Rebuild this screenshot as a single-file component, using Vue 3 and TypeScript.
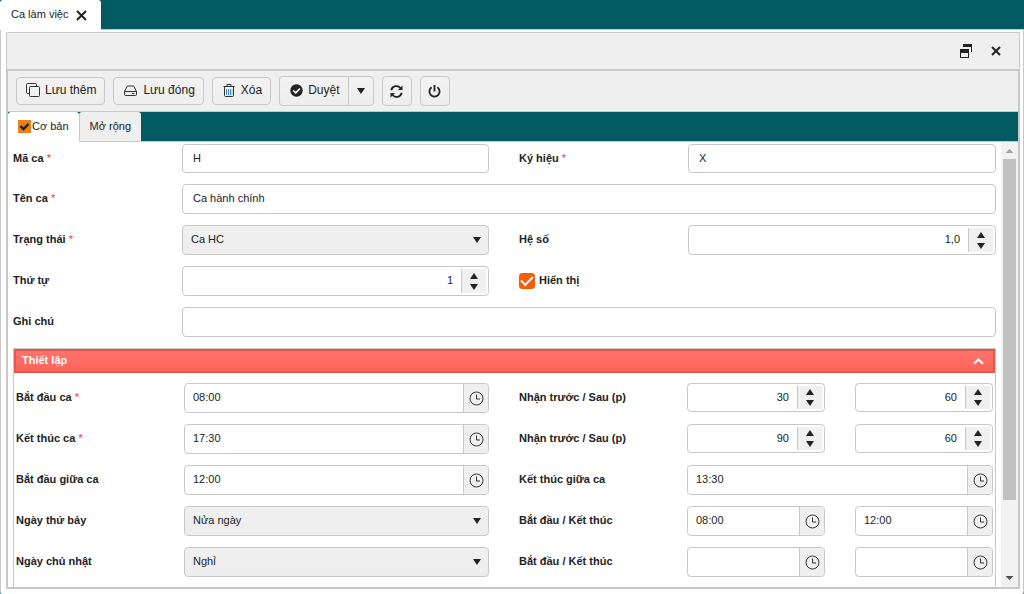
<script setup lang="ts">
import { reactive, ref } from 'vue'

type Kind = 'text' | 'select' | 'number' | 'time' | 'check'

interface Control {
  id: string
  kind: Kind
  value: string
  name?: string
}

interface Field {
  label: string
  required?: boolean
  controls: Control[]
}

const general = reactive<Field[][]>([
  [
    { label: 'Mã ca', required: true, controls: [{ id: 'code', kind: 'text', value: 'H' }] },
    { label: 'Ký hiệu', required: true, controls: [{ id: 'symbol', kind: 'text', value: 'X' }] },
  ],
  [{ label: 'Tên ca', required: true, controls: [{ id: 'name', kind: 'text', value: 'Ca hành chính' }] }],
  [
    { label: 'Trạng thái', required: true, controls: [{ id: 'state', kind: 'select', value: 'Ca HC' }] },
    { label: 'Hệ số', controls: [{ id: 'factor', kind: 'number', value: '1,0' }] },
  ],
  [
    { label: 'Thứ tự', controls: [{ id: 'order', kind: 'number', value: '1' }] },
    { label: 'Hiển thị', controls: [{ id: 'visible', kind: 'check', value: '' }] },
  ],
  [{ label: 'Ghi chú', controls: [{ id: 'note', kind: 'text', value: '' }] }],
])

const setup = reactive<Field[][]>([
  [
    { label: 'Bắt đầu ca', required: true, controls: [{ id: 'start', kind: 'time', value: '08:00' }] },
    {
      label: 'Nhận trước / Sau (p)',
      controls: [
        { id: 'inBefore', kind: 'number', value: '30' },
        { id: 'inAfter', kind: 'number', value: '60', name: 'Sau (p)' },
      ],
    },
  ],
  [
    { label: 'Kết thúc ca', required: true, controls: [{ id: 'end', kind: 'time', value: '17:30' }] },
    {
      label: 'Nhận trước / Sau (p)',
      controls: [
        { id: 'outBefore', kind: 'number', value: '90' },
        { id: 'outAfter', kind: 'number', value: '60', name: 'Sau (p)' },
      ],
    },
  ],
  [
    { label: 'Bắt đầu giữa ca', controls: [{ id: 'midStart', kind: 'time', value: '12:00' }] },
    { label: 'Kết thúc giữa ca', controls: [{ id: 'midEnd', kind: 'time', value: '13:30' }] },
  ],
  [
    { label: 'Ngày thứ bảy', controls: [{ id: 'saturday', kind: 'select', value: 'Nửa ngày' }] },
    {
      label: 'Bắt đầu / Kết thúc',
      controls: [
        { id: 'satStart', kind: 'time', value: '08:00' },
        { id: 'satEnd', kind: 'time', value: '12:00', name: 'Kết thúc' },
      ],
    },
  ],
  [
    { label: 'Ngày chủ nhật', controls: [{ id: 'sunday', kind: 'select', value: 'Nghỉ' }] },
    {
      label: 'Bắt đầu / Kết thúc',
      controls: [
        { id: 'sunStart', kind: 'time', value: '' },
        { id: 'sunEnd', kind: 'time', value: '', name: 'Kết thúc' },
      ],
    },
  ],
])

const blocks = [
  { key: 'general', rows: general },
  { key: 'setup', rows: setup },
]

const visible = ref(true)
const open = ref(true)

function step(control: Control, delta: number) {
  const decimals = control.value.includes(',') ? 1 : 0
  const next = parseFloat(control.value.replace(',', '.')) + delta
  control.value = next.toFixed(decimals).replace('.', ',')
}
</script>

<template>
  <div class="app">
    <nav class="page-tabs">
      <div class="page-tab">
        <span>Ca làm việc</span>
        <button type="button" class="plain" aria-label="Đóng thẻ">
          <svg width="11" height="11" viewBox="0 0 11 11"><path d="M1 1 10 10M10 1 1 10" stroke="#222" stroke-width="2" fill="none" /></svg>
        </button>
      </div>
    </nav>

    <main class="page">
      <section class="window">
        <header class="titlebar">
          <button type="button" class="plain" aria-label="Thu nhỏ">
            <svg width="13" height="14" viewBox="0 0 13 14">
              <path d="M3 0h9v8h-1V3H3z" fill="#222" />
              <path d="M0 5h9v9H0zM1 9v4h7V9z" fill="#222" fill-rule="evenodd" />
            </svg>
          </button>
          <button type="button" class="plain" aria-label="Đóng">
            <svg width="10" height="10" viewBox="0 0 10 10"><path d="M1 1 9 9M9 1 1 9" stroke="#222" stroke-width="2" fill="none" /></svg>
          </button>
        </header>

        <div class="body">
          <div class="toolbar">
            <button type="button" class="tool">
              <svg width="15" height="15" viewBox="0 0 15 15" fill="none" stroke="#333">
                <path d="M3.5 10.5h-2a1 1 0 0 1-1-1v-8a1 1 0 0 1 1-1h8a1 1 0 0 1 1 1v2" />
                <rect x="3.5" y="3.5" width="10" height="10" rx="1" />
              </svg>
              Lưu thêm
            </button>
            <button type="button" class="tool wide">
              <svg width="13" height="15" viewBox="0 0 13 15" fill="none" stroke="#333">
                <path d="M.5 8.500 3 3.500q.2-.5.8-.5h5.400q.6 0 .8.5l2.500 5v3a1 1 0 0 1-1 1h-10a1 1 0 0 1-1-1zM.5 8.500h12M8 10.500h2.500" />
              </svg>
              Lưu đóng
            </button>
            <button type="button" class="tool wide">
              <svg width="12" height="15" viewBox="0 0 12 15" fill="none" stroke="#333">
                <path d="M.5 3.500h11M4 3.500v-2h4v2M1.500 4v8.500a1 1 0 0 0 1 1h7a1 1 0 0 0 1-1V4" />
                <path d="M3.500 6v6M5.500 6v6M7.500 6v6" stroke="#3a8ed0" /><path d="M9 6v6" stroke="#8fc3ec" />
              </svg>
              Xóa
            </button>
            <div class="split">
              <button type="button" class="tool main">
                <svg width="13" height="13" viewBox="0 0 13 13">
                  <circle cx="6.500" cy="6.500" r="6.200" fill="#222" />
                  <path d="m3.300 6.500 2.400 2.300 4.200-4.200" fill="none" stroke="#fff" stroke-width="1.700" />
                </svg>
                Duyệt
              </button>
              <button type="button" class="tool more" aria-label="Tùy chọn duyệt">
                <svg width="8" height="6" viewBox="0 0 8 6"><path d="M0 0h8L4 6z" fill="#222" /></svg>
              </button>
            </div>
            <button type="button" class="tool square" aria-label="Làm mới">
              <svg width="13" height="13" viewBox="0 0 13 13" fill="none" stroke="#222" stroke-width="1.800">
                <path d="M1.300 5.200A5.200 5.200 0 0 1 10.400 3M11.700 7.800A5.200 5.200 0 0 1 2.600 10" />
                <path d="M12.500.6v4.500H8zM.5 12.400V7.900H5z" fill="#222" stroke="none" />
              </svg>
            </button>
            <button type="button" class="tool square" aria-label="Thoát">
              <svg width="13" height="13" viewBox="0 0 13 13" fill="none" stroke="#222" stroke-width="1.800">
                <path d="M3.700 2.300a5.100 5.100 0 1 0 5.600 0M6.500 0v6.500" />
              </svg>
            </button>
          </div>

          <div class="tabs" role="tablist">
            <button type="button" role="tab" aria-selected="true" class="tab active">
              <svg width="13" height="13" viewBox="0 0 13 13">
                <path d="M0 0h13v13H0z" fill="#e8811c" />
                <path d="m2.500 6.200 3 2.800 5-5" fill="none" stroke="#222" stroke-width="2.400" />
              </svg>
              Cơ bản
            </button>
            <button type="button" role="tab" aria-selected="false" class="tab">Mở rộng</button>
          </div>

          <div class="view">
            <form class="form" @submit.prevent>
              <div v-for="block in blocks" :key="block.key" :class="block.key">
                <button v-if="block.key === 'setup'" type="button" class="section-head" :aria-expanded="open" @click="open = !open">
                  <span>Thiết lập</span>
                  <svg width="11" height="7" viewBox="0 0 11 7"><path d="m1 5.800 4.500-4.300L10 5.800" fill="none" stroke="#fff" stroke-width="2" /></svg>
                </button>
                <div v-show="block.key === 'general' || open" class="rows">
                  <div v-for="(row, r) in block.rows" :key="r" class="row" :class="{ full: row.length === 1 }">
                    <template v-for="field in row" :key="field.label">
                      <div v-if="field.controls[0].kind === 'check'" class="check">
                        <input :id="field.controls[0].id" v-model="visible" type="checkbox" />
                        <label :for="field.controls[0].id">{{ field.label }}</label>
                      </div>
                      <div v-else class="field">
                        <label :for="field.controls[0].id">{{ field.label }} <span v-if="field.required" class="star">*</span></label>
                        <div class="controls">
                          <div v-for="c in field.controls" :key="c.id" class="box" :class="c.kind">
                            <template v-if="c.kind === 'select'">
                              <select :id="c.id" v-model="c.value">
                                <option>{{ c.value }}</option>
                              </select>
                              <svg class="caret" width="8" height="6" viewBox="0 0 8 6"><path d="M0 0h8L4 6z" fill="#222" /></svg>
                            </template>
                            <template v-else>
                              <input :id="c.id" v-model="c.value" type="text" :aria-label="c.name" />
                              <div v-if="c.kind === 'number'" class="spin">
                                <button type="button" class="plain" aria-label="Tăng" @click="step(c, 1)">
                                  <svg width="8" height="6" viewBox="0 0 8 6"><path d="M0 6h8L4 0z" fill="#222" /></svg>
                                </button>
                                <button type="button" class="plain" aria-label="Giảm" @click="step(c, -1)">
                                  <svg width="8" height="6" viewBox="0 0 8 6"><path d="M0 0h8L4 6z" fill="#222" /></svg>
                                </button>
                              </div>
                              <button v-if="c.kind === 'time'" type="button" class="clock" aria-label="Chọn giờ">
                                <svg width="15" height="15" viewBox="0 0 15 15" fill="none" stroke="#333">
                                  <circle cx="7.500" cy="7.500" r="6.500" /><path d="M7.500 3.500v4.500H11" />
                                </svg>
                              </button>
                            </template>
                          </div>
                        </div>
                      </div>
                    </template>
                  </div>
                </div>
              </div>
            </form>
            <div class="scroll" aria-hidden="true">
              <svg width="17" height="17" viewBox="0 0 17 17"><path d="M4.500 11h8l-4-4z" fill="#a3a3a3" /></svg>
              <div class="rail"><div class="thumb"></div></div>
              <svg width="17" height="17" viewBox="0 0 17 17"><path d="M4.500 6h8l-4 4z" fill="#505050" /></svg>
            </div>
          </div>
        </div>
      </section>
    </main>
  </div>
</template>

<style>
body {
  margin: 0;
}
</style>

<style scoped>
.app,
.app * {
  box-sizing: border-box;
}
.app {
  display: flex;
  flex-direction: column;
  height: 100vh;
  overflow: hidden;
  background: #005a61;
  color: #222;
  font: 11px/14px "Liberation Sans", Arial, sans-serif;
}
button,
input,
select {
  margin: 0;
  padding: 0;
  border: 0;
  outline: 0;
  background: none;
  color: inherit;
  font: inherit;
}
svg {
  display: block;
  flex: none;
}
.plain {
  display: flex;
  align-items: center;
  justify-content: center;
}
.page-tabs {
  display: flex;
  flex: none;
  height: 29px;
}
.page-tab {
  display: flex;
  align-items: center;
  gap: 8px;
  height: 30px;
  padding: 0 14px 0 11px;
  border-radius: 3px 3px 0 0;
  background: #fff;
  z-index: 1;
}
.page-tab span,
.section-head span {
  padding-bottom: 2px;
}
.page {
  display: flex;
  flex: 1;
  min-height: 0;
  padding: 2px 3px 5px 5px;
  border: 1px solid #c8c8c8;
  border-bottom: 0;
  border-radius: 0 0 2px 2px;
  background: #fff;
}
.window {
  display: flex;
  flex: 1;
  flex-direction: column;
  min-width: 0;
  background: #efefef;
}
.titlebar {
  display: flex;
  flex: none;
  align-items: center;
  justify-content: flex-end;
  gap: 18px;
  height: 37px;
  padding-right: 18px;
  border: 1px solid #c8c8c8;
  border-bottom: 0;
  border-radius: 2px 2px 0 0;
}
.body {
  display: flex;
  flex: 1;
  flex-direction: column;
  min-height: 0;
  border: 2px solid #c8c8c8;
}
.toolbar {
  display: flex;
  flex: none;
  align-items: center;
  gap: 8px;
  height: 41px;
  padding: 0 8px;
  border-bottom: 1px solid #c8c8c8;
}
.tool {
  display: flex;
  align-items: center;
  gap: 4px;
  height: 28px;
  padding: 0 8px 2px 9px;
  border: 1px solid #c8c8c8;
  border-radius: 4px;
  background: linear-gradient(#f2f2f2, #eee);
  font-size: 12px;
  white-space: nowrap;
}
.tool.wide {
  gap: 6px;
  padding-left: 10px;
}
.split {
  display: flex;
}
.split .tool,
.square {
  height: 30px;
}
.tool.main {
  gap: 5px;
  padding: 0 8px 2px 10px;
  border-right: 0;
  border-radius: 4px 0 0 4px;
}
.tool.more {
  padding: 0 8px;
  border-radius: 0 4px 4px 0;
}
.tool.square {
  justify-content: center;
  width: 30px;
  padding: 0;
}
.tabs {
  display: flex;
  flex: none;
  height: 30px;
  border-bottom: 1px solid #c8c8c8;
  background: #005a61;
}
.tab {
  display: flex;
  align-items: center;
  gap: 1px;
  height: 29px;
  padding: 0 10px 2px;
  border-left: 1px solid #c8c8c8;
  border-radius: 3px 3px 0 0;
  background: #efefef;
}
.tab.active {
  height: 30px;
  border-left: 0;
  background: #fff;
}
.view {
  display: flex;
  flex: 1;
  min-height: 0;
  background: #fff;
}
.form {
  flex: 1;
  min-width: 0;
  padding: 2px 5px 0;
  overflow: hidden;
}
.rows {
  display: flex;
  flex-direction: column;
  gap: 11px;
}
.general {
  margin-bottom: 11px;
}
.row {
  display: grid;
  grid-template-columns: minmax(0, 476fr) minmax(0, 477fr);
  gap: 30px;
  height: 30px;
}
.general .row:first-child {
  height: 29px;
}
.row.full {
  grid-template-columns: minmax(0, 1fr);
}
.field {
  display: grid;
  grid-template-columns: 169px minmax(0, 1fr);
  min-width: 0;
}
.setup .field {
  grid-template-columns: 168px minmax(0, 1fr);
}
label {
  font-weight: bold;
  line-height: 28px;
}
.star {
  color: #ff2b45;
  font-weight: normal;
}
.controls {
  display: flex;
  gap: 30px;
  min-width: 0;
}
.box {
  position: relative;
  display: flex;
  flex: 1;
  min-width: 0;
  border: 1px solid #c8c8c8;
  border-radius: 4px;
  background: #fff;
  overflow: hidden;
}
.box input,
.box select {
  flex: 1;
  width: 0;
  min-width: 0;
  padding: 0 8px 2px;
}
.box.text input {
  padding-left: 10px;
}
.box.select {
  background: linear-gradient(#f0f0f0, #ededed);
}
.box select {
  appearance: none;
}
.caret {
  position: absolute;
  top: 11px;
  right: 7px;
  pointer-events: none;
}
.box.number input {
  text-align: right;
}
.setup .box.number {
  height: 29px;
}
.spin {
  display: flex;
  flex-direction: column;
  justify-content: center;
  gap: 5px;
  width: 25px;
  margin: 2px 2px 2px 0;
  border-left: 1px solid #c8c8c8;
  background: #f0f0f0;
}
.clock {
  display: flex;
  align-items: center;
  justify-content: center;
  width: 25px;
  border-left: 1px solid #c8c8c8;
  background: #efefef;
}
.check {
  display: flex;
  align-items: center;
  gap: 4px;
}
.check input {
  display: grid;
  place-items: center;
  width: 16px;
  height: 16px;
  border: 1px solid #f95b00;
  border-radius: 3px;
  appearance: none;
}
.check input:checked {
  background: #f95b00;
}
.check input:checked::before {
  content: "";
  width: 10px;
  height: 5px;
  margin-bottom: 3px;
  border: solid #fff;
  border-width: 0 0 2px 2px;
  transform: rotate(-45deg);
}
.check label {
  height: 30px;
}
.setup {
  border: 1px solid #c8c8c8;
}
.section-head {
  display: flex;
  align-items: center;
  justify-content: space-between;
  width: 100%;
  height: 24px;
  padding: 0 9px 0 6px;
  border: 2px solid #e0594f;
  background: linear-gradient(#ff746c, #ff6359);
  color: #fff;
  font-weight: bold;
}
.setup .rows {
  padding: 10px 2px;
}
.scroll {
  display: flex;
  flex: none;
  flex-direction: column;
  width: 17px;
  background: #f1f1f1;
}
.rail {
  flex: 1;
  min-height: 0;
  padding: 0 2px;
}
.thumb {
  height: 83%;
  background: #c1c1c1;
}
</style>
